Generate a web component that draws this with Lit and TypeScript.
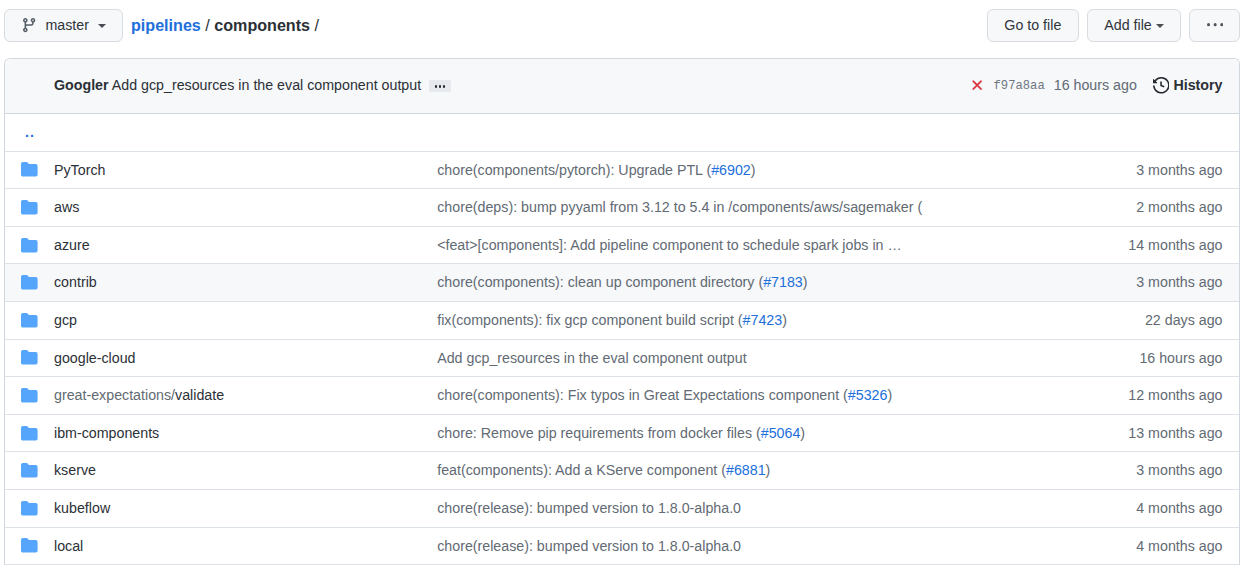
import { LitElement, html, css, nothing } from "lit";
import { customElement } from "lit/decorators.js";

interface Entry {
  prefix?: string;
  name: string;
  message: string;
  issue?: string;
  age: string;
  active?: boolean;
}

const ENTRIES: Entry[] = [
  { name: "PyTorch", message: "chore(components/pytorch): Upgrade PTL", issue: "#6902", age: "3 months ago" },
  { name: "aws", message: "chore(deps): bump pyyaml from 3.12 to 5.4 in /components/aws/sagemaker (", age: "2 months ago" },
  { name: "azure", message: "<feat>[components]: Add pipeline component to schedule spark jobs in …", age: "14 months ago" },
  { name: "contrib", message: "chore(components): clean up component directory", issue: "#7183", age: "3 months ago", active: true },
  { name: "gcp", message: "fix(components): fix gcp component build script", issue: "#7423", age: "22 days ago" },
  { name: "google-cloud", message: "Add gcp_resources in the eval component output", age: "16 hours ago" },
  { prefix: "great-expectations/", name: "validate", message: "chore(components): Fix typos in Great Expectations component", issue: "#5326", age: "12 months ago" },
  { name: "ibm-components", message: "chore: Remove pip requirements from docker files", issue: "#5064", age: "13 months ago" },
  { name: "kserve", message: "feat(components): Add a KServe component", issue: "#6881", age: "3 months ago" },
  { name: "kubeflow", message: "chore(release): bumped version to 1.8.0-alpha.0", age: "4 months ago" },
  { name: "local", message: "chore(release): bumped version to 1.8.0-alpha.0", age: "4 months ago" },
];

const BRANCH = "M11.75 2.5a.75.75 0 100 1.5.75.75 0 000-1.5zm-2.25.75a2.25 2.25 0 113 2.122V6A2.5 2.5 0 0110 8.5H6a1 1 0 00-1 1v1.128a2.251 2.251 0 11-1.5 0V5.372a2.25 2.25 0 111.5 0v1.836A2.492 2.492 0 016 7h4a1 1 0 001-1v-.628A2.25 2.25 0 019.5 3.25zM4.25 12a.75.75 0 100 1.5.75.75 0 000-1.5zM3.5 3.25a.75.75 0 111.5 0 .75.75 0 01-1.5 0z";
const HISTORY = "M1.643 3.143L.427 1.927A.25.25 0 000 2.104V5.75c0 .138.112.25.25.25h3.646a.25.25 0 00.177-.427L2.715 4.215a6.5 6.5 0 11-1.18 4.458.75.75 0 10-1.493.154 8.001 8.001 0 101.6-5.684zM7.75 4a.75.75 0 01.75.75v2.992l2.028.812a.75.75 0 01-.557 1.392l-2.5-1A.75.75 0 017 8.25v-3.5A.75.75 0 017.75 4z";
const FOLDER = "M1.75 1A1.75 1.75 0 000 2.75v10.5C0 14.216.784 15 1.75 15h12.5A1.75 1.75 0 0016 13.25v-8.5A1.75 1.75 0 0014.25 3h-6.5a.25.25 0 01-.2-.1l-.9-1.2c-.33-.44-.85-.7-1.4-.7h-3.5z";
const CROSS = "M3.72 3.72a.75.75 0 011.06 0L8 6.94l3.22-3.22a.75.75 0 111.06 1.06L9.06 8l3.22 3.22a.75.75 0 11-1.06 1.06L8 9.06l-3.22 3.22a.75.75 0 01-1.06-1.06L6.94 8 3.72 4.78a.75.75 0 010-1.06z";
const KEBAB = "M8 9a1.5 1.5 0 100-3 1.5 1.5 0 000 3zM1.5 9a1.5 1.5 0 100-3 1.5 1.5 0 000 3zm13 0a1.5 1.5 0 100-3 1.5 1.5 0 000 3z";

const icon = (path: string, name: string) =>
  html`<svg class="icon ${name}" viewBox="0 0 16 16" aria-hidden="true"><path fill-rule="evenodd" d=${path}></path></svg>`;

@customElement("app-root")
export class AppRoot extends LitElement {
  static styles = css`
    :host {
      display: block;
      box-sizing: border-box;
      height: 566px;
      overflow: hidden;
      padding: 9px 8px 0 4px;
      background: #fff;
      color: #2b3036;
      font: 14.24px/21px "Liberation Sans", Arial, sans-serif;
      white-space: nowrap;
    }
    * { box-sizing: border-box; }
    .icon { display: block; flex: none; width: 16.3px; height: 16.3px; fill: currentColor; }
    .toolbar { display: flex; align-items: center; height: 33px; }
    .btn {
      display: flex;
      align-items: center;
      justify-content: center;
      height: 33px;
      padding: 0;
      border: 1px solid #d9dce0;
      border-radius: 6px;
      background: #f6f8fa;
      color: #30353b;
      font: inherit;
    }
    .branch-btn { width: 119px; }
    .branch { color: #57606a; margin-right: 8px; }
    .caret { border: 4px solid transparent; border-top-color: #484d53; border-bottom: 0; margin-left: 9px; }
    .caret.near { margin-left: 4px; }
    .crumbs { flex: 1; margin-left: 8px; padding-bottom: 1px; font-size: 16.13px; }
    .crumbs a { color: #216fdb; font-weight: 700; }
    .actions { display: flex; gap: 8px; }
    .goto { width: 92px; }
    .add { width: 94.5px; }
    .more { width: 50.7px; }
    .kebab { color: #50555b; }
    .box { margin-top: 16px; border: 1px solid #d0d7de; border-radius: 6px 6px 0 0; border-bottom: 0; }
    .head {
      display: flex;
      align-items: center;
      height: 55px;
      padding: 0 16.5px 1px 49px;
      border-bottom: 1px solid #d0d7de;
      border-radius: 5px 5px 0 0;
      background: #f6f8fa;
    }
    .dots {
      display: flex;
      align-items: center;
      justify-content: center;
      gap: 1.6px;
      width: 22px;
      height: 12px;
      margin-left: 8px;
      border-radius: 1px;
      background: #e6eaee;
    }
    .dot { width: 2.4px; height: 2.4px; margin-top: 2px; border-radius: 1px; background: #24292f; }
    .meta { display: flex; align-items: center; margin-left: auto; color: #626a73; }
    .cross { color: #d7373d; stroke: currentColor; stroke-width: 0.4; }
    .sha { margin-left: 8.5px; padding-top: 2px; font: 12.2px/21px "Liberation Mono", monospace; color: #6e7781; }
    .when { margin-left: 9px; }
    .history { margin-left: 16px; width: 16.6px; height: 16.6px; color: #24292f; }
    .history-label { margin-left: 4px; font-weight: 700; }
    .row {
      display: grid;
      grid-template-columns: 49px 383.2px 1fr auto;
      align-items: center;
      height: 37.62px;
      padding-right: 16.5px;
      border-bottom: 1px solid #dde2e8;
      color: #626a73;
    }
    .row > span { padding-top: 0.4px; }
    .row.active { background: #f6f8fa; }
    .row .folder { margin-left: 16px; width: 16.6px; height: 16.6px; margin-bottom: 0.6px; color: #54a5fb; }
    .up { padding-left: 20px; color: #216fdb; font-weight: 700; letter-spacing: 1px; }
    .name { color: #2b3036; }
    .prefix { color: #626a73; }
    .issue { color: #216fdb; }
  `;

  render() {
    return html`
      <div class="toolbar">
        <button class="btn branch-btn">${icon(BRANCH, "branch")}<span>master</span><span class="caret"></span></button>
        <div class="crumbs"><a>pipelines</a> / <b>components</b> /</div>
        <div class="actions">
          <button class="btn goto">Go to file</button>
          <button class="btn add">Add file<span class="caret near"></span></button>
          <button class="btn more" aria-label="More options">${icon(KEBAB, "kebab")}</button>
        </div>
      </div>
      <div class="box">
        <div class="head">
          <span><b>Googler</b> Add gcp_resources in the eval component output</span>
          <span class="dots"><i class="dot"></i><i class="dot"></i><i class="dot"></i></span>
          <div class="meta">
            ${icon(CROSS, "cross")}<span class="sha">f97a8aa</span><span class="when">16 hours ago</span>
            ${icon(HISTORY, "history")}<b class="history-label name">History</b>
          </div>
        </div>
        <div class="row"><span class="up">..</span></div>
        ${ENTRIES.map(
          (e) => html`<div class="row ${e.active ? "active" : ""}">
            ${icon(FOLDER, "folder")}
            <span class="name">${e.prefix ? html`<span class="prefix">${e.prefix}</span>` : nothing}${e.name}</span>
            <span>${e.message}${e.issue ? html` (<a class="issue">${e.issue}</a>)` : nothing}</span>
            <span>${e.age}</span>
          </div>`
        )}
      </div>
    `;
  }
}
